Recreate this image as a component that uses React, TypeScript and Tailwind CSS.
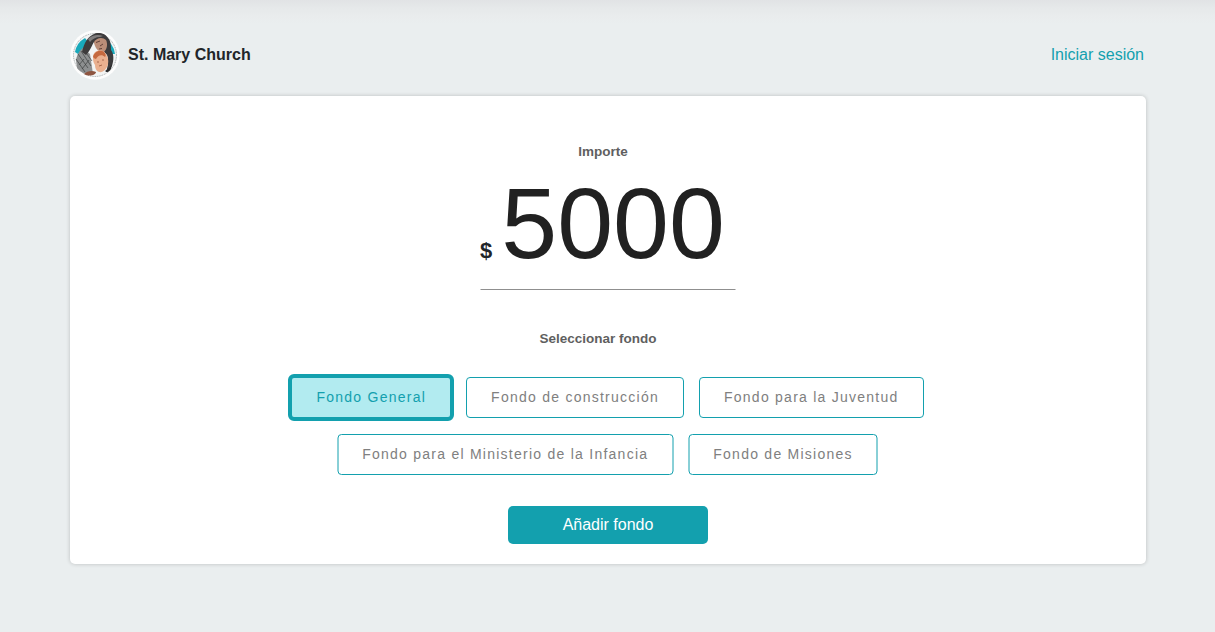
import React from "react";

function Logo() {
  return (
    <svg width="50" height="50" viewBox="0 0 50 50" className="shrink-0">
      <circle cx="25" cy="25" r="24.7" fill="#fdfdfd" />
      <circle cx="25" cy="25" r="21.5" fill="#f2f4f4" stroke="#8f9496" strokeWidth="0.8" strokeDasharray="1 0.8" />
      <path d="M5 22A20 20 0 0 1 15 8L19 13L11 26Z" fill="#19a9bb" />
      <path d="M33 8A20 20 0 0 1 45 24L39 24L33 13Z" fill="#19a9bb" />
      <path d="M6 30C7 24 10 20 13 18L20 24L23 44C16 45 10 42 7 38Z" fill="#8d8f90" />
      <path d="M8 24L18 38M6 29L15 42M11 21L21 36M14 20L22 31M9 35L14 29M12 39L19 30" stroke="#3e4041" strokeWidth="0.7" fill="none" />
      <path d="M12 22C14 13 18 6 25 3.5C30 2 36 4 38 8C41 11 41 16 41 20C44 24 44 30 42 36C40 40 38 42 36 42C38 36 39 30 37 25C33 20 28 17 24 12C22 15 20 21 16 25Z" fill="#3d3b3c" />
      <path d="M18 9C22 5 28 4 33 6L30 7C26 7 22 9 20 12Z" fill="#807d7d" />
      <path d="M24 12C27 7 33 7 36 10C38 14 37 19 34 22C31 23 28 21 26 18C25 16 24 14 24 12Z" fill="#bb8e78" />
      <path d="M26 12.5L30 11M30 16L33 14M29 19L32 18.5" stroke="#4d2f28" strokeWidth="0.8" />
      <path d="M23 27C23 22 29 19 33 21C37 24 39 29 38 34C37 39 33 43 29 42C26 41 25 38 25 35C23 32 23 30 23 27Z" fill="#eab08f" />
      <path d="M23 27C24 22 30 19 34 22C36 24 36 26 35 27C32 24 28 25 26 29C25 29 24 28 23 27Z" fill="#c5693f" />
      <path d="M27 32L29 32M32 30L34 30M29 36L32 35" stroke="#8c4a30" strokeWidth="0.7" />
      <path d="M14 44C17 41 22 40 26 42C26 45 19 47 14 44Z" fill="#8f5540" />
      <path d="M35 41C39 39 41 36 42 33L41 39C39 42 37 43 35 41Z" fill="#2b2b2c" />
    </svg>
  );
}

function Fund({ label, selected }: { label: string; selected?: boolean }) {
  if (selected) {
    return (
      <button className="h-[47px] -mr-[3px] pb-[2px] px-[24px] rounded-[6px] border-[4px] border-[#13a0ae] bg-[#b2ebf0] text-[#13a0ae] text-[14px] tracking-[1.25px] leading-none whitespace-nowrap">
        {label}
      </button>
    );
  }
  return (
    <button className="h-[41px] pb-[2px] px-[24px] rounded-[4px] border border-[#13a0ae] bg-white text-[#808080] text-[14px] tracking-[1.25px] leading-none whitespace-nowrap">
      {label}
    </button>
  );
}

export default function App() {
  return (
    <div
      className="h-[632px] overflow-hidden bg-[#eaeeef] bg-[linear-gradient(to_bottom,#e1e3e5_0px,#e6e9ea_8px,#e9eced_16px,#eaeeef_24px)] px-[70px] text-[#212121]"
      style={{ fontFamily: '"Liberation Sans", Arial, sans-serif' }}
    >
      <header className="h-[96px] pt-[14px] flex items-center justify-between pr-[1px]">
        <div className="flex items-center gap-[8px]">
          <Logo />
          <span className="text-[16px] font-bold text-[#212529]">St. Mary Church</span>
        </div>
        <a className="text-[16px] text-[#13a0ae]">Iniciar sesión</a>
      </header>
      <main className="w-[1076px] h-[468px] bg-white rounded-[5px] shadow-[0_0_4px_rgba(0,0,0,0.2)] flex flex-col items-center pt-[48px]">
        <div className="text-[13.5px] font-bold leading-[16px] text-[#5f5f5f] -translate-x-[5px]">Importe</div>
        <div className="w-[255px] h-[130px] border-b border-[#8f8f8f] flex items-start -translate-x-[0.5px]">
          <span className="mt-[77px] text-[22px] font-bold leading-[28px] text-[#212529]">$</span>
          <span className="ml-[9px] mt-[3px] text-[100.5px] leading-[121px] text-[#212121]">5000</span>
        </div>
        <div className="mt-[41px] text-[13.5px] font-bold leading-[16px] text-[#5f5f5f] -translate-x-[10px]">Seleccionar fondo</div>
        <div className="mt-[27px] flex flex-col items-center gap-[14px]">
          <div className="flex items-center gap-[15px] h-[47px] -translate-x-[2px]">
            <Fund label="Fondo General" selected />
            <Fund label="Fondo de construcción" />
            <Fund label="Fondo para la Juventud" />
          </div>
          <div className="flex items-center gap-[15px] -mt-[1px] -translate-x-[0.5px]">
            <Fund label="Fondo para el Ministerio de la Infancia" />
            <Fund label="Fondo de Misiones" />
          </div>
        </div>
        <button className="mt-[31px] w-[200px] h-[38px] rounded-[5px] bg-[#13a0ae] text-white text-[16px]">
          Añadir fondo
        </button>
      </main>
    </div>
  );
}
